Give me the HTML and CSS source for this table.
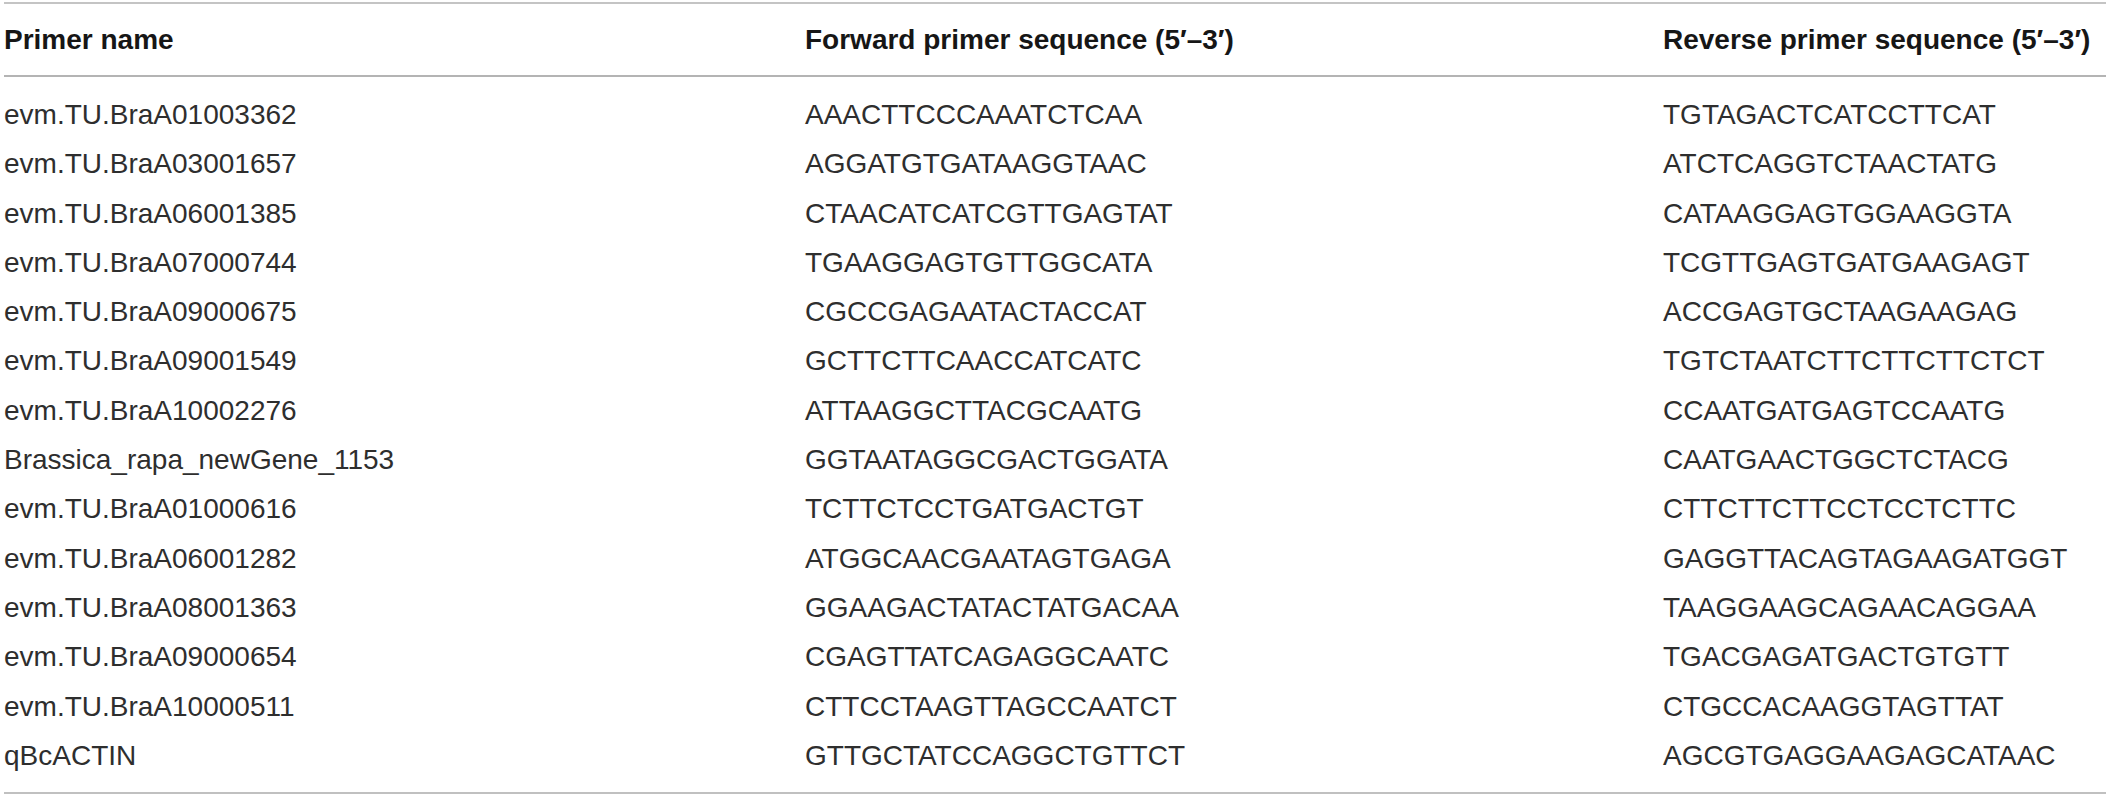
FILE: index.html
```html
<!DOCTYPE html>
<html lang="en">
<head>
<meta charset="utf-8">
<title>Primer sequences</title>
<link rel="stylesheet" href="styles.css">
</head>
<body>
<table class="primers">
  <colgroup>
    <col class="c1"><col class="c2"><col class="c3">
  </colgroup>
  <thead>
    <tr>
      <th>Primer name</th>
      <th>Forward primer sequence (5′–3′)</th>
      <th>Reverse primer sequence (5′–3′)</th>
    </tr>
  </thead>
  <tbody>
    <tr class="first"><td>evm.TU.BraA01003362</td><td>AAACTTCCCAAATCTCAA</td><td>TGTAGACTCATCCTTCAT</td></tr>
    <tr><td>evm.TU.BraA03001657</td><td>AGGATGTGATAAGGTAAC</td><td>ATCTCAGGTCTAACTATG</td></tr>
    <tr><td>evm.TU.BraA06001385</td><td>CTAACATCATCGTTGAGTAT</td><td>CATAAGGAGTGGAAGGTA</td></tr>
    <tr><td>evm.TU.BraA07000744</td><td>TGAAGGAGTGTTGGCATA</td><td>TCGTTGAGTGATGAAGAGT</td></tr>
    <tr><td>evm.TU.BraA09000675</td><td>CGCCGAGAATACTACCAT</td><td>ACCGAGTGCTAAGAAGAG</td></tr>
    <tr><td>evm.TU.BraA09001549</td><td>GCTTCTTCAACCATCATC</td><td>TGTCTAATCTTCTTCTTCTCT</td></tr>
    <tr><td>evm.TU.BraA10002276</td><td>ATTAAGGCTTACGCAATG</td><td>CCAATGATGAGTCCAATG</td></tr>
    <tr><td>Brassica_rapa_newGene_1153</td><td>GGTAATAGGCGACTGGATA</td><td>CAATGAACTGGCTCTACG</td></tr>
    <tr><td>evm.TU.BraA01000616</td><td>TCTTCTCCTGATGACTGT</td><td>CTTCTTCTTCCTCCTCTTC</td></tr>
    <tr><td>evm.TU.BraA06001282</td><td>ATGGCAACGAATAGTGAGA</td><td>GAGGTTACAGTAGAAGATGGT</td></tr>
    <tr><td>evm.TU.BraA08001363</td><td>GGAAGACTATACTATGACAA</td><td>TAAGGAAGCAGAACAGGAA</td></tr>
    <tr><td>evm.TU.BraA09000654</td><td>CGAGTTATCAGAGGCAATC</td><td>TGACGAGATGACTGTGTT</td></tr>
    <tr><td>evm.TU.BraA10000511</td><td>CTTCCTAAGTTAGCCAATCT</td><td>CTGCCACAAGGTAGTTAT</td></tr>
    <tr class="last"><td>qBcACTIN</td><td>GTTGCTATCCAGGCTGTTCT</td><td>AGCGTGAGGAAGAGCATAAC</td></tr>
  </tbody>
</table>
</body>
</html>
```

FILE: styles.css
```css
html, body {
  margin: 0;
  padding: 0;
  background: #ffffff;
}

body {
  padding: 2px 0 0 4px;
  font-family: "Liberation Sans", Arial, Helvetica, sans-serif;
  color: #1e1e1e;
}

.primers {
  width: 2102px;
  border-collapse: collapse;
  table-layout: fixed;
  font-size: 28px;
}

.primers .c1 { width: 801px; }
.primers .c2 { width: 858px; }
.primers .c3 { width: auto; }

.primers thead tr {
  border-top: 2px solid #c4c4c4;
  border-bottom: 2px solid #b4b4b4;
}

.primers th {
  text-align: left;
  font-weight: bold;
  color: #161616;
  padding: 11px 0 11px 0;
  line-height: 49px;
  height: 49px;
  box-sizing: content-box;
}

.primers td {
  text-align: left;
  font-weight: normal;
  color: #2e2e2e;
  padding: 0;
  line-height: 49.3px;
  height: 49.3px;
  white-space: nowrap;
}

.primers tr.first td {
  padding-top: 13px;
}

.primers tr.last td {
  padding-bottom: 12px;
}

.primers tbody {
  border-bottom: 2px solid #c0c0c0;
}
```
